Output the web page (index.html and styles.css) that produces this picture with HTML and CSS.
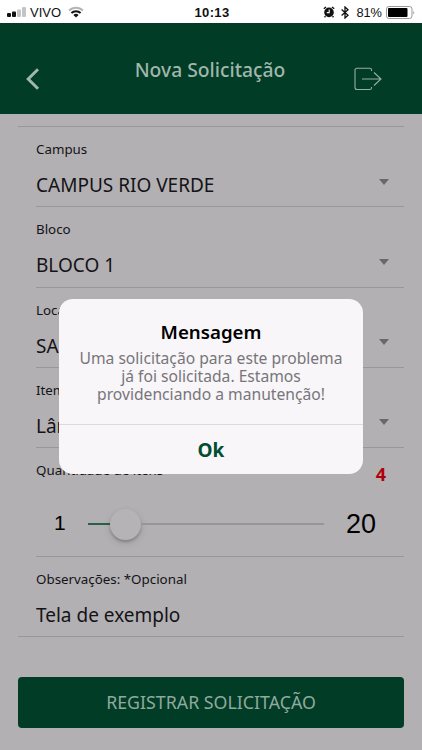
FILE: index.html
```html
<!DOCTYPE html>
<html lang="pt-BR">
<head>
    <meta charset="UTF-8">
    <meta name="viewport" content="width=device-width, initial-scale=1.0">
    <title>Nova Solicitação</title>
    <link rel="stylesheet" href="styles.css">
</head>
<body>
    <!-- Barra de status -->
    <div class="status-bar">
        <div class="status-left">
            <svg width="19" height="10" viewBox="0 0 19 10">
                <rect x="0" y="6" width="4" height="4" rx="1" fill="#111"/>
                <rect x="5" y="4.5" width="4" height="5.5" rx="1" fill="#111"/>
                <rect x="10" y="2.5" width="4" height="7.5" rx="1" fill="#c4c4c4"/>
                <rect x="15" y="0" width="4" height="10" rx="1" fill="#c4c4c4"/>
            </svg>
            <span class="carrier">VIVO</span>
            <svg width="16" height="12" viewBox="0 0 16 12" fill="none" stroke-width="2">
                <path d="M1 4.6A10 10 0 0 1 15 4.6" stroke="#b5b5b5"/>
                <path d="M3.4 7A6.6 6.6 0 0 1 12.6 7" stroke="#111"/>
                <path d="M8 11.5L5.4 9A3.7 3.7 0 0 1 10.6 9Z" fill="#111"/>
            </svg>
        </div>
        <span class="clock">10:13</span>
        <div class="status-right">
            <svg width="12" height="12" viewBox="0 0 12 12" fill="none">
                <circle cx="6" cy="6.4" r="4.8" fill="#111"/>
                <path d="M.8 2.8L3 1M11.2 2.8L9 1M2.5 10.2L1.5 11.3M9.5 10.2L10.5 11.3" stroke="#111" stroke-width="1.4"/>
                <path d="M3.8 6.6H6.2V3.6" stroke="#fff" stroke-width="1.1"/>
            </svg>
            <svg class="bluetooth" width="8" height="13" viewBox="0 0 8 13" fill="none" stroke="#111" stroke-width="1.3">
                <path d="M.6 3.5L7 9.3L4 12V1L7 3.7L.6 9.5"/>
            </svg>
            <span class="percent">81%</span>
            <svg class="battery" width="29" height="13" viewBox="0 0 29 13">
                <rect x=".5" y=".5" width="25.5" height="12" rx="2.5" fill="#fff" stroke="#999"/>
                <rect x="2" y="2" width="19.5" height="9" rx="1" fill="#000"/>
                <path d="M27.3 4.5Q29 6.5 27.3 8.5Z" fill="#999"/>
            </svg>
        </div>
    </div>

    <header class="header">
        <svg class="back-icon" width="14" height="22" viewBox="0 0 14 22" fill="none">
            <path d="M12 1.2L2.2 11L12 20.8" stroke="#a1b6ac" stroke-width="3"/>
        </svg>
        <h1 class="title">Nova Solicitação</h1>
        <svg class="exit-icon" width="28" height="24" viewBox="0 0 28 24" fill="none" stroke="#98afa4" stroke-width="1.1">
            <path d="M17.5 4V2.8Q17.5 1.2 15.8 1.2H3Q1 1.2 1 3.2V20.5Q1 22.5 3 22.5H15.8Q17.5 22.5 17.5 20.7V20M8 12H27M20 5.5L27 12L20 18.5"/>
        </svg>
    </header>

    <main class="form">
        <div class="item">
            <span class="label">Campus</span>
            <div class="select"><span>CAMPUS RIO VERDE</span><i class="arrow"></i></div>
        </div>
        <div class="item">
            <span class="label">Bloco</span>
            <div class="select"><span>BLOCO 1</span><i class="arrow"></i></div>
        </div>
        <div class="item">
            <span class="label">Local</span>
            <div class="select"><span>SALA</span><i class="arrow"></i></div>
        </div>
        <div class="item">
            <span class="label">Item</span>
            <div class="select"><span>Lâmpada</span><i class="arrow"></i></div>
        </div>
        <div class="item item-range">
            <div class="range-head">
                <span class="label">Quantidade de itens</span>
                <span class="badge">4</span>
            </div>
            <div class="range">
                <span class="range-min">1</span>
                <div class="track">
                    <div class="track-active"></div>
                    <div class="knob"></div>
                    <div class="track-rest"></div>
                </div>
                <span class="range-max">20</span>
            </div>
        </div>
        <div class="item item-last">
            <span class="label">Observações: *Opcional</span>
            <div class="select"><span>Tela de exemplo</span></div>
        </div>
        <button class="submit">REGISTRAR SOLICITAÇÃO</button>
    </main>

    <!-- Alerta -->
    <div class="backdrop">
        <div class="alert">
            <h2 class="alert-title">Mensagem</h2>
            <p class="alert-message">Uma solicitação para este problema<br>já foi solicitada. Estamos<br>providenciando a manutenção!</p>
            <button class="alert-button">Ok</button>
        </div>
    </div>
</body>
</html>
```
FILE: styles.css
```css
* {
    box-sizing: border-box;
}

body {
    margin: 0;
    height: 750px;
    overflow: hidden;
    background-color: #b2b0b3;
    color: #141316;
    font-family: "Noto Sans", "Open Sans", sans-serif;
}

svg {
    display: block;
    flex: none;
}

button {
    border: none;
    font-family: inherit;
}

/* Barra de status */
.status-bar {
    display: grid;
    grid-template-columns: 1fr auto 1fr;
    align-items: center;
    height: 23px;
    padding: 0 7px;
    background-color: #fff;
    color: #111;
    font-family: "Liberation Sans", Arial, sans-serif;
    font-size: 13px;
    line-height: 23px;
}

.status-left,
.status-right {
    display: flex;
    align-items: center;
}

.status-right {
    justify-content: flex-end;
}

.carrier {
    margin: 1px 7px 0 4px;
    font-size: 13px;
}

.clock {
    padding-left: 2px;
    font-weight: bold;
    letter-spacing: 0.4px;
}

.bluetooth {
    margin-left: 6px;
}

.percent {
    margin: 1px 4px 0 7px;
    font-size: 12.8px;
}

/* Cabeçalho */
.header {
    display: flex;
    align-items: center;
    justify-content: space-between;
    height: 91px;
    padding: 21px 40px 0 26px;
    background-color: #003c26;
}

.title {
    margin: 0 0 19px 26px;
    color: #a1b6ac;
    font-size: 19.3px;
    font-weight: 500;
    line-height: 26px;
}

/* Formulário */
.form {
    padding: 12px 18px 0;
}

.form::before {
    content: "";
    display: block;
    height: 1px;
    background-color: #99979a;
}

.item {
    height: 80.3px;
    margin-left: 18px;
    padding-top: 13px;
    border-bottom: 1px solid #99979a;
}

.label {
    display: block;
    font-size: 13.35px;
    line-height: 18px;
}

.select {
    display: flex;
    align-items: center;
    justify-content: space-between;
    height: 26px;
    margin-top: 14px;
    padding-right: 15px;
    font-size: 19px;
    line-height: 26px;
}

.arrow {
    border: 5.5px solid transparent;
    border-top: 6px solid #69676a;
    border-bottom: 0;
    margin-bottom: 7px;
}

.item-range {
    height: 109px;
}

.range-head {
    display: flex;
    justify-content: space-between;
    height: 32px;
}

.badge {
    padding: 1px 18px 0 0;
    color: #b2000b;
    font-size: 18px;
    font-weight: bold;
    line-height: 24px;
}

.range {
    display: flex;
    align-items: center;
    height: 44px;
    margin-top: 9px;
    padding: 0 28px 0 18px;
    color: #000;
    font-family: "Liberation Sans", Arial, sans-serif;
}

.range-min {
    width: 34px;
    padding-bottom: 3px;
    font-size: 21px;
}

.range-max {
    font-size: 27px;
}

.track {
    display: flex;
    flex: 1;
    align-items: center;
    margin-right: 22px;
}

.track-active {
    width: 22px;
    height: 2px;
    background-color: #276248;
}

.knob {
    width: 31px;
    height: 31px;
    border-radius: 50%;
    background-color: #b5b3b6;
    box-shadow: 0 2px 3px rgba(0, 0, 0, 0.22), 0 3px 9px rgba(0, 0, 0, 0.1);
}

.track-rest {
    flex: 1;
    height: 2px;
    background-color: #979598;
}

.item-last {
    height: 80.3px;
    margin-left: 0;
    padding-left: 18px;
}

.submit {
    display: block;
    width: 100%;
    height: 51px;
    margin-top: 40px;
    padding: 0;
    border-radius: 4px;
    background-color: #003c26;
    color: #8fa99c;
    font-size: 17.8px;
    line-height: 51px;
}

/* Alerta */
.backdrop {
    position: absolute;
    top: 23px;
    right: 0;
    bottom: 0;
    left: 0;
    display: flex;
    align-items: center;
    justify-content: center;
}

.alert {
    width: 304px;
    height: 175px;
    overflow: hidden;
    border-radius: 14px;
    background-color: #f8f6f9;
    text-align: center;
}

.alert-title {
    margin: 0;
    padding: 20px 0 1px;
    color: #000;
    font-size: 18.7px;
    font-weight: 600;
    line-height: 26px;
}

.alert-message {
    height: 78px;
    margin: 0;
    padding-top: 3px;
    color: #77757a;
    font-size: 15.65px;
    line-height: 18px;
}

.alert-button {
    width: 100%;
    height: 50px;
    padding: 0;
    border-top: 1px solid #dcdadd;
    background: none;
    color: #004d2f;
    font-size: 19px;
    font-weight: bold;
}
```
